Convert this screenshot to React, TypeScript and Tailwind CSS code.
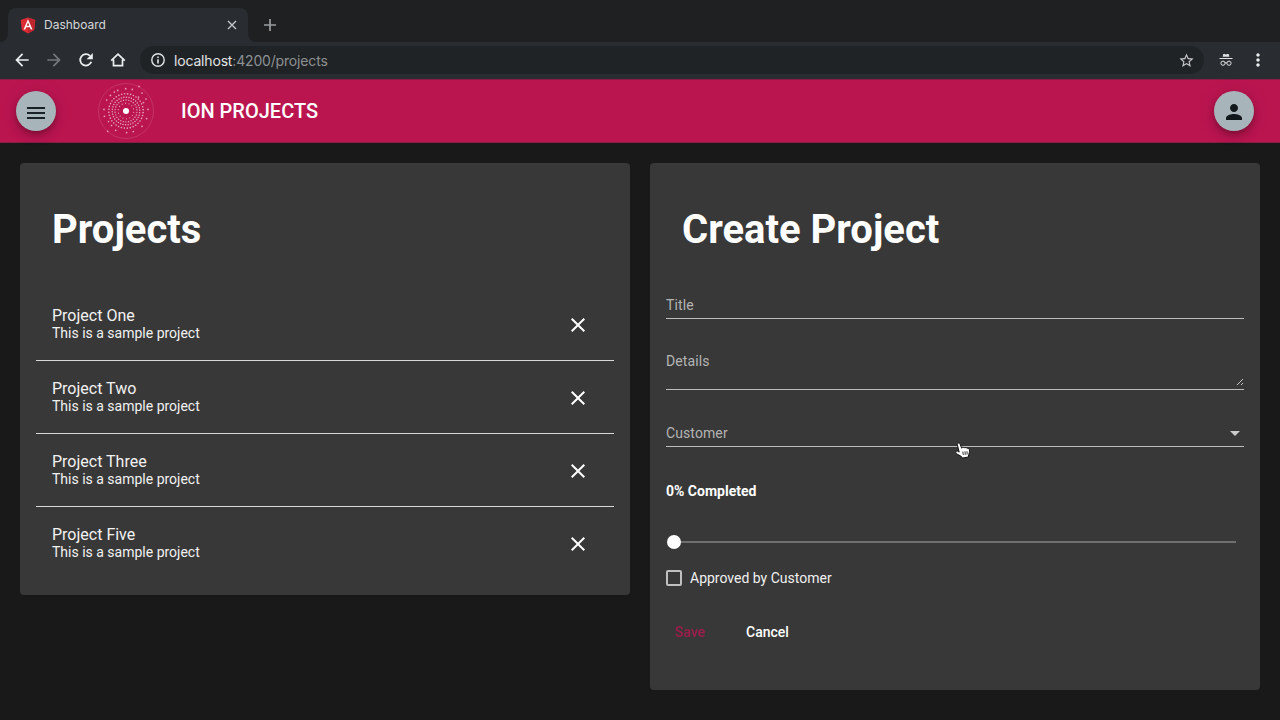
import React from "react";
import {
  MdArrowBack,
  MdArrowForward,
  MdClose,
  MdMoreVert,
  MdPerson,
  MdStarBorder,
} from "react-icons/md";

const projects = ["Project One", "Project Two", "Project Three", "Project Five"];

const rings = [
  { r: 7.8, n: 14, s: 0.6 },
  { r: 11, n: 26, s: 0.7 },
  { r: 13.8, n: 34, s: 0.75 },
  { r: 17.2, n: 36, s: 0.8 },
];

const outerDots = [
  [13, -24.6], [-0.3, -22.3], [6.3, -21.6], [-8.3, -20.6], [-11.6, -19], [16, -18],
  [-15.6, -15.6], [-19.3, -11], [20, -12], [22, -1.6], [-22, -1.6], [-21.6, 5.3],
  [20.6, 7.6], [16, 15.3], [-18.3, 20.3], [-10.3, 19.3], [0.6, 21.6], [7.3, 20.6],
  [-17.5, 10.5], [-14.5, 14.5], [12.5, -14], [17.5, -8.5],
];

function IonLogo() {
  return (
    <svg viewBox="-29 -29 58 58" className="h-[58px] w-[58px]">
      <circle r="27.5" fill="none" stroke="#fff" strokeOpacity=".12" strokeWidth="1" />
      <circle r="3" fill="#fff" />
      {rings.map((ring) =>
        Array.from({ length: ring.n }, (_, i) => {
          const a = (i / ring.n) * Math.PI * 2 + ring.r;
          return (
            <circle
              key={`${ring.r}-${i}`}
              cx={ring.r * Math.cos(a)}
              cy={ring.r * Math.sin(a)}
              r={ring.s}
              fill="#eba5bd"
            />
          );
        })
      )}
      {outerDots.map(([x, y]) => (
        <circle key={`${x},${y}`} cx={x} cy={y} r=".85" fill="#eba0ba" />
      ))}
    </svg>
  );
}

function BrowserChrome() {
  return (
    <div className="font-[Inter,sans-serif]">
      <div className="flex h-[42px] items-end bg-[#1e2022]">
        <div className="flex h-[42px] w-2 items-end bg-[#292d31]">
          <div className="h-[42px] w-2 rounded-br-lg bg-[#1e2022]" />
        </div>
        <div className="flex h-[34px] w-60 items-center rounded-t-lg bg-[#292d31] pr-[11px] pl-3">
          <svg viewBox="0 0 16 17" className="h-[17px] w-4">
            <path d="M8 .4 15.3 3l-1.1 10L8 16.6 1.8 13 .7 3Z" fill="#dd2c33" />
            <path d="M8 .4 15.3 3l-1.1 10L8 16.6Z" fill="#c2252f" />
            <path d="M8 2.2 3.5 12.5h1.7l.9-2.3h3.8l.9 2.3h1.7ZM8 5.5l1.3 3.3H6.7Z" fill="#fff" />
          </svg>
          <span className="ml-2 flex-1 text-[12px] text-[#d5d8da]">Dashboard</span>
          <svg viewBox="0 0 10 10" className="h-[10px] w-[10px]" stroke="#c4c7ca" strokeWidth="1.4">
            <path d="m1 1 8 8M9 1 1 9" />
          </svg>
        </div>
        <div className="flex h-[42px] w-2 bg-[#292d31]">
          <div className="h-[42px] w-2 rounded-bl-lg bg-[#1e2022]" />
        </div>
        <svg viewBox="0 0 12 12" className="mb-[11px] ml-2 h-3 w-3" stroke="#9a9da0" strokeWidth="1.7">
          <path d="M6 0v12M0 6h12" />
        </svg>
      </div>
      <div className="flex h-[37px] items-center bg-[#292d31] pb-px pl-3">
        <MdArrowBack className="h-5 w-5 text-[#eceef0]" />
        <MdArrowForward className="ml-3 h-5 w-5 text-[#75797d]" />
        <svg viewBox="0 0 16 16" className="ml-[14px] h-4 w-4" fill="none" stroke="#eceef0" strokeWidth="1.8">
          <path d="M13.3 9.8A5.7 5.7 0 1 1 12 3.9" />
          <path d="M14.8 1v6.2H8.6Z" fill="#eceef0" stroke="none" />
        </svg>
        <svg viewBox="0 0 16 16" className="ml-4 h-4 w-4" fill="none" stroke="#eceef0" strokeWidth="1.7">
          <path d="M1.2 8.6 8 2.2l6.8 6.4M3.5 7.5v6.2h9V7.5" />
        </svg>
        <div className="ml-[14px] flex h-7 w-[1064px] items-center rounded-full bg-[#202325] pr-[9px] pl-[11px]">
          <svg viewBox="0 0 14 14" className="h-[14px] w-[14px]" fill="none" stroke="#e2e4e6" strokeWidth="1.4">
            <circle cx="7" cy="7" r="6.2" />
            <path d="M7 6.2v4.2M7 3.4v1.5" strokeWidth="1.6" />
          </svg>
          <span className="ml-[9px] flex-1 text-[14px] tracking-[-0.17px] text-[#8d9194]">
            <span className="text-[#e2e4e6]">localhost</span>:4200/projects
          </span>
          <MdStarBorder className="h-[17px] w-[17px] text-[#c6c8ca]" />
        </div>
        <svg viewBox="0 0 14 14" className="ml-[15px] h-[14px] w-[14px]" fill="#dfe1e3">
          <path d="M4.3 1h1.4L7 1.5 8.3 1h1.4l.7 2.8H3.6ZM.5 5h13v1.1H.5Z" />
          <g fill="none" stroke="#dfe1e3" strokeWidth="1">
            <circle cx="4" cy="10.2" r="2.1" />
            <circle cx="10" cy="10.2" r="2.1" />
            <path d="M6 10q1-.6 2 0" />
          </g>
        </svg>
        <MdMoreVert className="ml-[15px] h-5 w-5 text-[#eceef0]" />
      </div>
    </div>
  );
}

function Field({ label, className, children }: { label: string; className: string; children?: React.ReactNode }) {
  return (
    <div className={`mx-4 flex justify-between border-b border-[#bdbdbd] text-[14px] leading-4 tracking-[0.1px] text-[#b4b4b4] ${className}`}>
      <span>{label}</span>
      {children}
    </div>
  );
}

function HandCursor() {
  return (
    <svg viewBox="0 0 16 18" className="absolute top-[442px] left-[955px] h-[18px] w-4">
      <path
        d="M3 1.2c1-.5 1.7 0 2.1 1l1.6 4 .8-.8c.7-.3 1.3 0 1.6.4.8-.6 1.5-.3 1.9.2.9-.5 1.5 0 1.8.6.9-.2 1.5.3 1.6 1.2.3 2-.2 3.3-.6 4.6l-.5 2.6-5.8 1.1-1.1-1.6L2.5 12.3C1.5 11.6.6 10.8.7 10c.4-1.2 1.7-1 2.5-.5l1 .6L2.4 3c-.3-.8 0-1.4.6-1.8Z"
        fill="#fff"
        stroke="#111"
        strokeWidth="1"
      />
      <path d="m7.8 9.500.5 3.500m1.7-3.700.3 3.500m1.7-3.600.1 3.400" stroke="#222" strokeWidth=".9" />
    </svg>
  );
}

export default function App() {
  return (
    <div className="relative flex h-[720px] w-[1280px] flex-col overflow-hidden bg-[#191919] font-[Roboto,sans-serif] text-white">
      <BrowserChrome />
      <header className="flex h-16 shrink-0 items-center border-y border-[#8a1c46] bg-[#bb1550] pr-[26px] pl-4">
        <button className="flex h-10 w-10 items-center justify-center rounded-full bg-[#a7b5ba] shadow-[0_3px_5px_-1px_rgba(0,0,0,.2),0_6px_10px_rgba(0,0,0,.14),0_1px_18px_rgba(0,0,0,.12)]">
          <svg viewBox="0 0 18 14" className="mt-[3px] h-[14px] w-[18px]" stroke="#182226" strokeWidth="2">
            <path d="M0 2h18M0 7h18M0 12h18" />
          </svg>
        </button>
        <div className="ml-[41px]">
          <IonLogo />
        </div>
        <h1 className="ml-[26px] flex-1 text-[20px] font-medium">ION PROJECTS</h1>
        <button className="flex h-10 w-10 items-center justify-center rounded-full bg-[#a7b5ba] shadow-[0_3px_5px_-1px_rgba(0,0,0,.2),0_6px_10px_rgba(0,0,0,.14),0_1px_18px_rgba(0,0,0,.12)]">
          <MdPerson className="mt-[2px] h-6 w-6 text-[#11191c]" />
        </button>
      </header>
      <main className="flex items-start gap-5 p-5">
        <section className="h-[432px] w-[610px] rounded bg-[#383838] px-4">
          <h2 className="px-4 pt-[43px] text-[40px] leading-[48px] font-bold">Projects</h2>
          <ul className="mt-[34px]">
            {projects.map((name) => (
              <li key={name} className="flex h-[73px] items-center justify-between border-b border-[#d8d8d8] px-4 pt-[2px] last:border-b-transparent">
                <div className="text-[#f2f2f2]">
                  <h3 className="text-[16px] leading-4">{name}</h3>
                  <p className="text-[14px] leading-[18px]">This is a sample project</p>
                </div>
                <button className="mr-2">
                  <MdClose className="h-6 w-6" />
                </button>
              </li>
            ))}
          </ul>
        </section>
        <section className="h-[527px] w-[610px] rounded bg-[#383838]">
          <h2 className="px-8 pt-[43px] text-[40px] leading-[48px] font-bold">Create Project</h2>
          <Field label="Title" className="mt-[43px] h-[22px]" />
          <Field label="Details" className="mt-[34px] h-[37px]">
            <svg viewBox="0 0 8 8" className="mt-[25px] h-2 w-2" stroke="#c8c8c8" strokeWidth="1">
              <path d="M1 7 7 1M5 7l2-2" />
            </svg>
          </Field>
          <Field label="Customer" className="mt-[35px] h-[22px]">
            <svg viewBox="0 0 10 5" className="mt-[6px] mr-1 h-[5px] w-[10px]" fill="#cacaca">
              <path d="m0 0h10L5 5Z" />
            </svg>
          </Field>
          <p className="mx-4 mt-[36px] text-[14px] leading-4 font-bold">0% Completed</p>
          <div className="mx-4 mt-[36px] flex h-[14px] items-center pr-2">
            <div className="h-[14px] w-[14px] translate-x-px rounded-full bg-white" />
            <div className="h-[2px] flex-1 bg-[#6f6f6f]" />
          </div>
          <label className="mx-4 mt-[21px] flex h-4 items-center text-[14px] leading-4 text-[#f0f0f0]">
            <span className="mr-2 h-4 w-4 rounded-xs border-2 border-[#c0c0c0]" />
            Approved by Customer
          </label>
          <div className="mt-[28px] flex h-9 items-center pl-[25px] text-[14px] font-medium">
            <button className="w-[71px] text-left text-[#a01c4b] blur-[0.4px]">Save</button>
            <button>Cancel</button>
          </div>
        </section>
      </main>
      <HandCursor />
    </div>
  );
}
